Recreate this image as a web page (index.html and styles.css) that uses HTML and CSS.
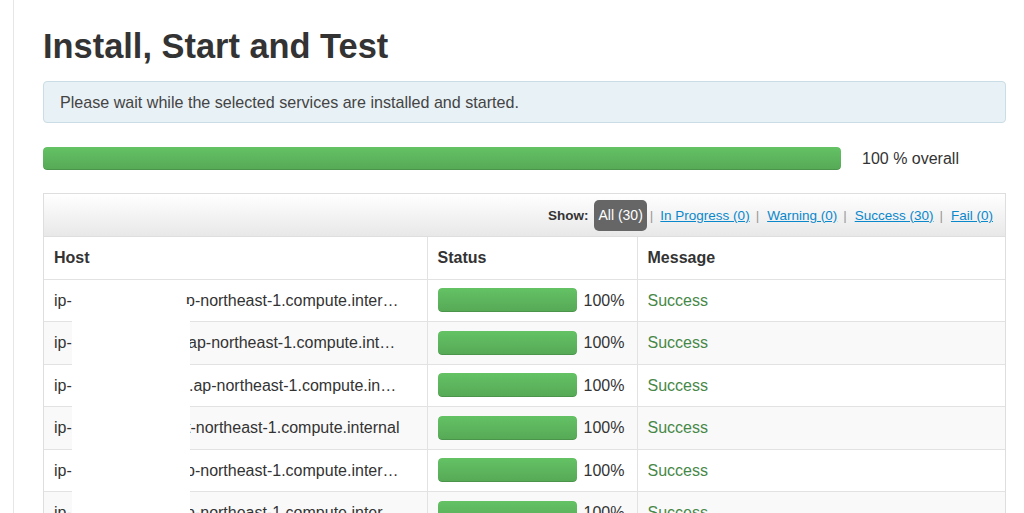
FILE: index.html
```html
<!DOCTYPE html>
<html>
<head>
<meta charset="utf-8">
<link rel="stylesheet" href="styles.css">
</head>
<body>
<div class="page">
  <h1 class="title">Install, Start and Test</h1>
  <div class="alert">Please wait while the selected services are installed and started.</div>
  <div class="overall">
    <div class="bar"><div class="bar-fill" style="width:100%"></div></div>
    <div class="overall-label">100 % overall</div>
  </div>
  <div class="panel">
    <div class="filter">
      <span class="show">Show:</span>
      <span class="pill">All (30)</span>
      <span class="sep first">|</span>
      <a class="flink" href="#">In Progress (0)</a>
      <span class="sep">|</span>
      <a class="flink" href="#">Warning (0)</a>
      <span class="sep">|</span>
      <a class="flink" href="#">Success (30)</a>
      <span class="sep">|</span>
      <a class="flink" href="#">Fail (0)</a>
    </div>
    <table class="hosts">
      <thead>
        <tr><th class="c-host">Host</th><th class="c-status">Status</th><th class="c-msg">Message</th></tr>
      </thead>
      <tbody>
        <tr><td><span class="pre">ip-</span><span class="rest">p-northeast-1.compute.inter…</span></td><td><div class="st"><div class="bar small"><div class="bar-fill" style="width:100%"></div></div><span class="pct">100%</span></div></td><td class="ok">Success</td></tr>
        <tr><td><span class="pre">ip-</span><span class="rest r2">ap-northeast-1.compute.int…</span></td><td><div class="st"><div class="bar small"><div class="bar-fill" style="width:100%"></div></div><span class="pct">100%</span></div></td><td class="ok">Success</td></tr>
        <tr><td><span class="pre">ip-</span><span class="rest r3">.ap-northeast-1.compute.in…</span></td><td><div class="st"><div class="bar small"><div class="bar-fill" style="width:100%"></div></div><span class="pct">100%</span></div></td><td class="ok">Success</td></tr>
        <tr><td><span class="pre">ip-</span><span class="rest">t-northeast-1.compute.internal</span></td><td><div class="st"><div class="bar small"><div class="bar-fill" style="width:100%"></div></div><span class="pct">100%</span></div></td><td class="ok">Success</td></tr>
        <tr><td><span class="pre">ip-</span><span class="rest">p-northeast-1.compute.inter…</span></td><td><div class="st"><div class="bar small"><div class="bar-fill" style="width:100%"></div></div><span class="pct">100%</span></div></td><td class="ok">Success</td></tr>
        <tr><td><span class="pre">ip-</span><span class="rest">p-northeast-1.compute.inter…</span></td><td><div class="st"><div class="bar small"><div class="bar-fill" style="width:100%"></div></div><span class="pct">100%</span></div></td><td class="ok">Success</td></tr>
        <tr><td><span class="pre">ip-</span><span class="rest">p-northeast-1.compute.inter…</span></td><td><div class="st"><div class="bar small"><div class="bar-fill" style="width:100%"></div></div><span class="pct">100%</span></div></td><td class="ok">Success</td></tr>
      </tbody>
    </table>
    <div class="redact"></div>
  </div>
</div>
</body>
</html>
```

FILE: styles.css
```css
html, body {
  margin: 0;
  padding: 0;
  overflow: hidden;
  background: #fff;
}
body {
  font-family: "Liberation Sans", Arial, sans-serif;
  color: #333;
  font-size: 16px;
}
.page {
  margin-left: 13px;
  border-left: 1px solid #e6e6e6;
  padding: 26px 18px 0 29px;
  min-height: 100vh;
}
.title {
  margin: 0;
  font-size: 34.4px;
  line-height: 40px;
  font-weight: bold;
  color: #333;
}
.alert {
  margin-top: 15px;
  background: #e8f1f5;
  border: 1px solid #cadde6;
  border-radius: 4px;
  padding: 10px 16px 10px 16px;
  line-height: 21px;
  height: 20px;
  font-size: 16.1px;
  color: #444;
}
.overall {
  margin-top: 24px;
  display: grid;
  grid-template-columns: 1fr 165px;
  align-items: center;
}
.bar {
  height: 23px;
  border-radius: 4px;
  background: #f0f0f0;
  overflow: hidden;
}
.bar-fill {
  height: 100%;
  background: linear-gradient(to bottom, #64c264, #56a956);
  box-shadow: inset 0 -1px 0 rgba(0,0,0,0.12);
  border-radius: 4px;
}
.overall-label {
  padding-left: 21px;
  line-height: 22px;
}
.panel {
  margin-top: 23px;
  position: relative;
  border: 1px solid #dedede;
  border-bottom: none;
}
.filter {
  height: 42px;
  background: linear-gradient(to bottom, #ffffff, #e8e8e8);
  display: flex;
  align-items: center;
  justify-content: flex-end;
  padding-right: 12px;
  font-size: 13.5px;
  border-bottom: 1px solid #dedede;
}
.show {
  font-weight: bold;
  color: #333;
  margin-right: 6px;
}
.pill {
  background: #666;
  color: #fff;
  border-radius: 5px;
  padding: 0 4px;
  height: 31px;
  line-height: 31px;
  display: inline-block;
  font-size: 14px;
}
.sep {
  color: #999;
  margin: 0 8px 0 6px;
}
.sep.first {
  margin: 0 7px 0 3px;
}
.flink {
  color: #0a88cc;
  text-decoration: underline;
}
.hosts {
  width: 100%;
  border-collapse: collapse;
  table-layout: fixed;
}
.c-host { width: 383px; }
.c-status { width: 210px; }
.hosts th, .hosts td {
  box-sizing: border-box;
  text-align: left;
  padding: 10px 9px 10px 10px;
  line-height: 21.5px;
  border-top: 1px solid #e2e2e2;
  border-left: 1px solid #e2e2e2;
  white-space: nowrap;
  overflow: hidden;
  vertical-align: middle;
}
.hosts th:first-child, .hosts td:first-child {
  border-left: none;
}
.hosts thead th {
  border-top: none;
  font-weight: bold;
}
.hosts tbody tr:nth-child(even) td {
  background: #f9f9f9;
}
.pre {
  display: inline-block;
  width: 132px;
}
.r2 { margin-left: 2px; }
.r3 { margin-left: 3px; }
.st {
  display: flex;
  align-items: center;
  height: 21.5px;
}
.bar.small {
  width: 139px;
  height: 24px;
  flex: none;
}
.pct {
  margin-left: 7px;
}
.ok {
  color: #468847;
}
.redact {
  position: absolute;
  left: 28px;
  width: 118px;
  top: 110px;
  bottom: 0;
  background: #fff;
}
```
